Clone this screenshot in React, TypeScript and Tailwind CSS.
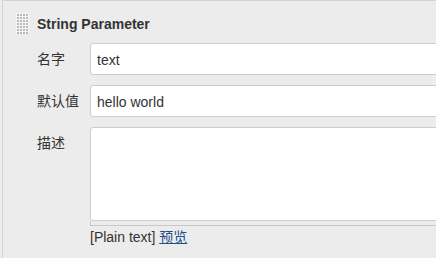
import React from 'react';

const font = { fontFamily: '"Liberation Sans", "Noto Sans CJK SC", sans-serif' };

function DragHandle() {
    const dots = [];
    for (let r = 0; r < 7; r++) {
        for (let c = 0; c < 4; c++) {
            dots.push(<rect key={`${r}-${c}`} x={1 + c * 3} y={1 + r * 3} width="2" height="2" fill="#b8b8b8" />);
        }
    }
    return (
        <svg width="13" height="21" viewBox="0 0 13 21" className="shrink-0">
            <rect x="0" y="0" width="13" height="21" fill="#f7f7f7" />
            {dots}
        </svg>
    );
}

export default function App() {
    return (
        <div className="w-[436px] h-[258px] bg-[#ececec] overflow-hidden pl-[2px] text-[#333]" style={font}>
            <div className="h-full border-t border-l border-[#d4d4d4]">
                <div className="flex items-center gap-[8px] pl-[13px] pt-[12px] h-[33px]">
                    <DragHandle />
                    <span className="text-[14px] font-bold leading-none">String Parameter</span>
                </div>

                <div className="mt-[9px] flex flex-col gap-[10px]">
                    <div className="flex items-center">
                        <label className="w-[87px] shrink-0 pl-[34px] text-[14px]">名字</label>
                        <div className="w-[360px] shrink-0 h-[32px] bg-white border border-[#ccc] rounded-[3px] flex items-center px-[6px] pt-[2px] text-[14px]">text</div>
                    </div>
                    <div className="flex items-center">
                        <label className="w-[87px] shrink-0 pl-[34px] text-[14px]">默认值</label>
                        <div className="w-[360px] shrink-0 h-[32px] bg-white border border-[#ccc] rounded-[3px] flex items-center px-[6px] pt-[2px] text-[14px]">hello world</div>
                    </div>
                    <div className="flex items-start">
                        <label className="w-[87px] shrink-0 pl-[34px] pt-[6px] text-[14px]">描述</label>
                        <div className="flex flex-col shrink-0">
                            <div className="w-[360px] h-[94px] bg-white border border-[#ccc] rounded-[3px]"></div>
                            <div className="w-[360px] h-[5px] border-l border-b border-[#c8c8c8] bg-[#ececec]"></div>
                            <div className="mt-[3px] text-[14px] leading-[16px]">
                                [Plain text] <a href="#" className="text-[#1f4e8c] underline">预览</a>
                            </div>
                        </div>
                    </div>
                </div>
            </div>
        </div>
    );
}
